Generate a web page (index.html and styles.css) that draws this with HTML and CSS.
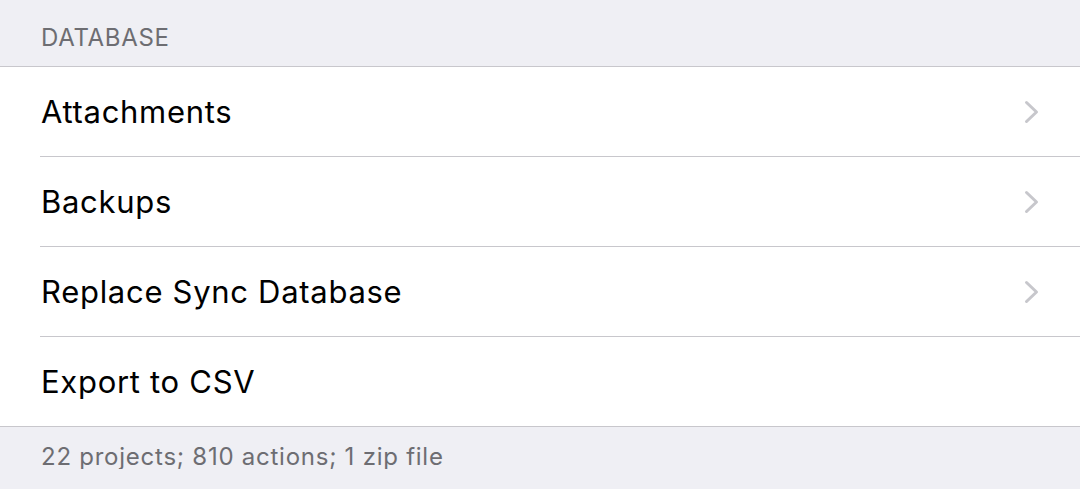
FILE: index.html
```html
<!DOCTYPE html>
<html lang="en">
<head>
    <meta charset="UTF-8">
    <meta name="viewport" content="width=device-width, initial-scale=1.0">
    <title>Database</title>
    <link rel="stylesheet" href="styles.css">
</head>
<body>

    <div class="section-header">DATABASE</div>

    <div class="group">
        <div class="row">
            <div class="row-inner">
                <span class="row-title">Attachments</span>
                <svg class="chevron" width="16" height="24" viewBox="0 0 16 24"><path d="M2.5 2.5 L12.5 12 L2.5 21.5" fill="none" stroke="#c7c7cc" stroke-width="3" stroke-linecap="round" stroke-linejoin="round"/></svg>
            </div>
        </div>
        <div class="row">
            <div class="row-inner">
                <span class="row-title">Backups</span>
                <svg class="chevron" width="16" height="24" viewBox="0 0 16 24"><path d="M2.5 2.5 L12.5 12 L2.5 21.5" fill="none" stroke="#c7c7cc" stroke-width="3" stroke-linecap="round" stroke-linejoin="round"/></svg>
            </div>
        </div>
        <div class="row">
            <div class="row-inner">
                <span class="row-title">Replace Sync Database</span>
                <svg class="chevron" width="16" height="24" viewBox="0 0 16 24"><path d="M2.5 2.5 L12.5 12 L2.5 21.5" fill="none" stroke="#c7c7cc" stroke-width="3" stroke-linecap="round" stroke-linejoin="round"/></svg>
            </div>
        </div>
        <div class="row">
            <div class="row-inner">
                <span class="row-title">Export to CSV</span>
            </div>
        </div>
    </div>

    <div class="section-footer">22 projects; 810 actions; 1 zip file</div>

</body>
</html>
```

FILE: styles.css
```css
body {
    font-family: Inter, "Liberation Sans", sans-serif;
    margin: 0;
    padding: 0;
    background-color: #efeff4;
    overflow: hidden;
}
.section-header {
    height: 66px;
    box-sizing: border-box;
    padding: 26px 40px 0 41px;
    font-size: 24px;
    line-height: 24px;
    letter-spacing: 0.7px;
    color: #6d6d72;
}
.group {
    background-color: #fff;
    border-top: 1px solid #c8c7cc;
    border-bottom: 1px solid #c8c7cc;
}
.row {
    padding-left: 40px;
}
.row-inner {
    display: flex;
    align-items: center;
    justify-content: space-between;
    height: 89px;
    padding-right: 40px;
    border-bottom: 1px solid #c8c7cc;
}
.row:last-child .row-inner {
    border-bottom: none;
}
.row-title {
    font-size: 31px;
    letter-spacing: 0.7px;
    color: #000;
    padding-left: 1px;
}
.chevron {
    display: block;
}
.section-footer {
    padding: 18px 40px 0 41px;
    font-size: 24px;
    line-height: 24px;
    letter-spacing: 0.75px;
    color: #6d6d72;
}
```
